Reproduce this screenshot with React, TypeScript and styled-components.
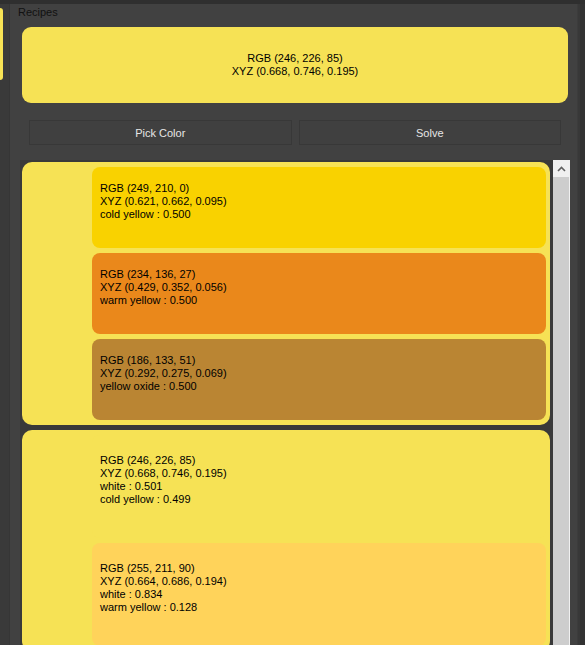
import React from "react";
import styled, { createGlobalStyle } from "styled-components";

const GlobalStyle = createGlobalStyle`
  html, body {
    margin: 0;
    padding: 0;
    background: #3a3a3a;
    overflow: hidden;
  }
  * { box-sizing: border-box; }
`;

const Window = styled.div`
  width: 585px;
  height: 645px;
  display: flex;
  flex-direction: column;
  font-family: "Liberation Sans", Arial, sans-serif;
  font-size: 11px;
  background: #3a3a3a;
  overflow: hidden;
`;

const TopStrip = styled.div`
  height: 4px;
  background: #2f2f2f;
  flex-shrink: 0;
`;

const Body = styled.div`
  flex: 1;
  display: flex;
  min-height: 0;
`;

const LeftRail = styled.div`
  width: 10px;
  flex-shrink: 0;
  padding-top: 4px;
  background: #3a3a3a;
  border-right: 1px solid #363636;
`;

const LeftTab = styled.div`
  width: 3px;
  height: 72px;
  background: #f6e255;
  border-radius: 0 4px 4px 0;
`;

const Group = styled.div`
  flex: 1;
  display: flex;
  flex-direction: column;
  background: #414141;
  min-width: 0;
  padding: 0 7px 0 12px;
`;

const RightRail = styled.div`
  width: 8px;
  flex-shrink: 0;
  background: #383838;
  border-left: 1px solid #3c3c3c;
  box-shadow: inset -5px 0 0 #323232;
`;

const GroupTitle = styled.div`
  margin-left: -4px;
  height: 23px;
  padding-top: 2px;
  color: #111111;
  line-height: 13px;
`;

const Swatch = styled.div<{ $color: string }>`
  height: 76px;
  margin-right: 2px;
  border-radius: 9px;
  background: ${(p) => p.$color};
  display: flex;
  flex-direction: column;
  align-items: center;
  justify-content: center;
  color: #000;
  line-height: 13px;
`;

const ButtonRow = styled.div`
  display: flex;
  gap: 7px;
  margin: 17px 9px 0 7px;
`;

const Button = styled.div`
  flex: 1;
  height: 25px;
  display: flex;
  align-items: center;
  justify-content: center;
  background: #404040;
  border: 1px solid #383838;
  color: #e6e6e6;
  font-size: 11px;
`;

const ScrollArea = styled.div`
  flex: 1;
  margin: 15px 0 0 -2px;
  display: flex;
  background: #393939;
  min-height: 0;
  overflow: hidden;
`;

const Viewport = styled.div`
  flex: 1;
  padding: 2px 3px 0 2px;
  display: flex;
  flex-direction: column;
  gap: 5px;
  min-width: 0;
`;

const Scrollbar = styled.div`
  width: 17px;
  display: flex;
  flex-direction: column;
  background: #cdcdcd;
  border-right: 1px solid #f0f0f0;
`;

const ScrollUp = styled.div`
  height: 17px;
  background: #f0f0f0;
  display: flex;
  align-items: center;
  justify-content: center;
`;

const Recipe = styled.div<{ $color: string }>`
  background: ${(p) => p.$color};
  border-radius: 10px;
  padding: 5px 4px 5px 70px;
  display: flex;
  flex-direction: column;
  gap: 5px;
  flex-shrink: 0;
`;

const Ingredient = styled.div<{ $color: string; $height: number }>`
  height: ${(p) => p.$height}px;
  background: ${(p) => p.$color};
  border-radius: 8px;
  padding: 0 8px 13px 8px;
  display: flex;
  flex-direction: column;
  justify-content: center;
  color: #000;
  line-height: 13px;
  flex-shrink: 0;
`;

type Part = { color: string; lines: string[] };
type RecipeData = { color: string; height: number; parts: Part[] };

const recipes: RecipeData[] = [
  {
    color: "rgb(246, 226, 85)",
    height: 81,
    parts: [
      {
        color: "rgb(249, 210, 0)",
        lines: ["RGB (249, 210, 0)", "XYZ (0.621, 0.662, 0.095)", "cold yellow : 0.500"],
      },
      {
        color: "rgb(234, 136, 27)",
        lines: ["RGB (234, 136, 27)", "XYZ (0.429, 0.352, 0.056)", "warm yellow : 0.500"],
      },
      {
        color: "rgb(186, 133, 51)",
        lines: ["RGB (186, 133, 51)", "XYZ (0.292, 0.275, 0.069)", "yellow oxide : 0.500"],
      },
    ],
  },
  {
    color: "rgb(246, 226, 85)",
    height: 103,
    parts: [
      {
        color: "rgb(246, 226, 85)",
        lines: ["RGB (246, 226, 85)", "XYZ (0.668, 0.746, 0.195)", "white : 0.501", "cold yellow : 0.499"],
      },
      {
        color: "rgb(255, 211, 90)",
        lines: ["RGB (255, 211, 90)", "XYZ (0.664, 0.686, 0.194)", "white : 0.834", "warm yellow : 0.128"],
      },
    ],
  },
];

export default function App() {
  return (
    <Window>
      <GlobalStyle />
      <TopStrip />
      <Body>
        <LeftRail>
          <LeftTab />
        </LeftRail>
        <Group>
          <GroupTitle>Recipes</GroupTitle>
          <Swatch $color="rgb(246, 226, 85)">
            <span>RGB (246, 226, 85)</span>
            <span>XYZ (0.668, 0.746, 0.195)</span>
          </Swatch>
          <ButtonRow>
            <Button>Pick Color</Button>
            <Button>Solve</Button>
          </ButtonRow>
          <ScrollArea>
            <Viewport>
              {recipes.map((r, i) => (
                <Recipe key={i} $color={r.color}>
                  {r.parts.map((p, j) => (
                    <Ingredient key={j} $color={p.color} $height={r.height}>
                      {p.lines.map((l) => (
                        <span key={l}>{l}</span>
                      ))}
                    </Ingredient>
                  ))}
                </Recipe>
              ))}
            </Viewport>
            <Scrollbar>
              <ScrollUp>
                <svg width="9" height="6" viewBox="0 0 9 6">
                  <polyline points="1,5 4.5,1.5 8,5" fill="none" stroke="#606060" strokeWidth="1.6" />
                </svg>
              </ScrollUp>
            </Scrollbar>
          </ScrollArea>
        </Group>
        <RightRail />
      </Body>
    </Window>
  );
}
